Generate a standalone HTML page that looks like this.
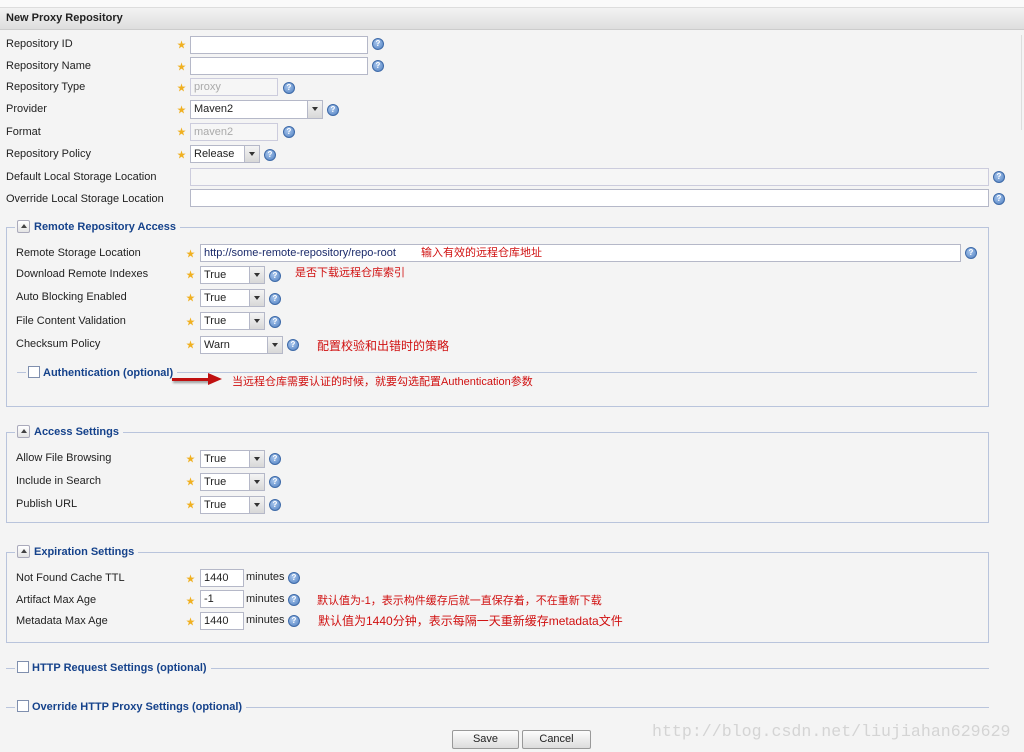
<!DOCTYPE html>
<html><head><meta charset="utf-8">
<style>
*{box-sizing:border-box;margin:0;padding:0}
body{width:1024px;height:752px;background:#f4f4f4;font-family:"Liberation Sans","Noto Sans CJK SC",sans-serif;font-size:11px;color:#222;position:relative;overflow:hidden}
.a{position:absolute}
.lbl{position:absolute;line-height:14px;white-space:nowrap}
.star{position:absolute;color:#f0b020;font-size:9px;line-height:10px}
.in{position:absolute;background:#fff;border:1px solid #b5b8c8;height:18px;line-height:16px;padding-left:3px;white-space:nowrap}
.dis{background:#f6f6f6;color:#aaa;border-color:#ccd}
.sel .ar{position:absolute;right:0;top:0;width:15px;height:16px;background:linear-gradient(#f4f4f4,#d8d8d8);border-left:1px solid #b5b8c8}
.sel .ar:after{content:"";position:absolute;left:4px;top:6px;border:3px solid transparent;border-top:4px solid #333;border-bottom:0;width:0}
.help{position:absolute;width:12px;height:12px;border-radius:50%;background:radial-gradient(circle at 40% 35%,#a9c7ee,#4f7fc0);border:1px solid #3e6aa8;color:#fff;font-size:8px;line-height:10px;text-align:center;font-weight:bold}
.fs{position:absolute;border:1px solid #b9c4dc}
.leg{position:absolute;background:#f4f4f4;color:#15428b;font-weight:bold;line-height:14px;padding:0 4px 0 2px;white-space:nowrap}
.tog{display:inline-block;width:13px;height:13px;border:1px solid #aab;border-radius:2px;background:linear-gradient(#fff,#e4e4e4);vertical-align:-3px;margin-right:4px;position:relative}
.tog:after{content:"";position:absolute;left:3px;top:3px;border:3px solid transparent;border-bottom:4px solid #444;border-top:0}
.cb{display:inline-block;width:12px;height:12px;border:1px solid #7f8fae;background:#fff;vertical-align:-2px;margin-right:3px}
.hl{position:absolute;height:1px;background:#b9c4dc}
.red{position:absolute;color:#d01010;white-space:nowrap;line-height:14px}
.btn{position:absolute;height:19px;border:1px solid #999;border-radius:2px;background:linear-gradient(#fdfdfd,#dcdcdc);text-align:center;line-height:17px}
</style></head><body>
<div class="a" style="left:0;top:0;width:1024px;height:8px;background:#fafafa;border-bottom:1px solid #ddd"></div>
<div class="a" style="left:0;top:8px;width:1024px;height:22px;background:linear-gradient(#f3f3f3,#dedede);border-bottom:1px solid #ccc"></div>
<div class="lbl" style="left:6px;top:11px;font-weight:bold;color:#222">New Proxy Repository</div>
<div class="a" style="left:1021px;top:35px;width:1px;height:95px;background:#ddd"></div>

<div class="lbl" style="left:6px;top:37px">Repository ID</div><div class="star" style="left:177px;top:40px">★</div>
<div class="in" style="left:190px;top:36px;width:178px"></div><div class="help" style="left:372px;top:38px">?</div>
<div class="lbl" style="left:6px;top:59px">Repository Name</div><div class="star" style="left:177px;top:62px">★</div>
<div class="in" style="left:190px;top:57px;width:178px"></div><div class="help" style="left:372px;top:60px">?</div>
<div class="lbl" style="left:6px;top:80px">Repository Type</div><div class="star" style="left:177px;top:83px">★</div>
<div class="in dis" style="left:190px;top:78px;width:88px">proxy</div><div class="help" style="left:283px;top:82px">?</div>
<div class="lbl" style="left:6px;top:102px">Provider</div><div class="star" style="left:177px;top:105px">★</div>
<div class="in sel" style="left:190px;top:100px;width:133px;height:19px">Maven2<div class="ar" style="height:17px"></div></div><div class="help" style="left:327px;top:104px">?</div>
<div class="lbl" style="left:6px;top:125px">Format</div><div class="star" style="left:177px;top:127px">★</div>
<div class="in dis" style="left:190px;top:123px;width:88px">maven2</div><div class="help" style="left:283px;top:126px">?</div>
<div class="lbl" style="left:6px;top:147px">Repository Policy</div><div class="star" style="left:177px;top:150px">★</div>
<div class="in sel" style="left:190px;top:145px;width:70px">Release<div class="ar"></div></div><div class="help" style="left:264px;top:149px">?</div>
<div class="lbl" style="left:6px;top:170px">Default Local Storage Location</div>
<div class="in dis" style="left:190px;top:168px;width:799px"></div><div class="help" style="left:993px;top:171px">?</div>
<div class="lbl" style="left:6px;top:192px">Override Local Storage Location</div>
<div class="in" style="left:190px;top:189px;width:799px"></div><div class="help" style="left:993px;top:193px">?</div>

<!-- Remote -->
<div class="fs" style="left:6px;top:227px;width:983px;height:180px"></div>
<div class="leg" style="left:15px;top:220px"><span class="tog"></span>Remote Repository Access</div>
<div class="lbl" style="left:16px;top:246px">Remote Storage Location</div><div class="star" style="left:186px;top:249px">★</div>
<div class="in" style="left:200px;top:244px;width:761px;color:#1a2a6a">http://some-remote-repository/repo-root</div><div class="help" style="left:965px;top:247px">?</div>
<div class="red" style="left:421px;top:246px">输入有效的远程仓库地址</div>
<div class="lbl" style="left:16px;top:267px">Download Remote Indexes</div><div class="star" style="left:186px;top:270px">★</div>
<div class="in sel" style="left:200px;top:266px;width:65px">True<div class="ar"></div></div><div class="help" style="left:269px;top:270px">?</div>
<div class="red" style="left:295px;top:266px">是否下载远程仓库索引</div>
<div class="lbl" style="left:16px;top:290px">Auto Blocking Enabled</div><div class="star" style="left:186px;top:293px">★</div>
<div class="in sel" style="left:200px;top:289px;width:65px">True<div class="ar"></div></div><div class="help" style="left:269px;top:293px">?</div>
<div class="lbl" style="left:16px;top:314px">File Content Validation</div><div class="star" style="left:186px;top:317px">★</div>
<div class="in sel" style="left:200px;top:312px;width:65px">True<div class="ar"></div></div><div class="help" style="left:269px;top:316px">?</div>
<div class="lbl" style="left:16px;top:337px">Checksum Policy</div><div class="star" style="left:186px;top:340px">★</div>
<div class="in sel" style="left:200px;top:336px;width:83px">Warn<div class="ar"></div></div><div class="help" style="left:287px;top:339px">?</div>
<div class="red" style="left:317px;top:339px;font-size:12px">配置校验和出错时的策略</div>
<div class="hl" style="left:17px;top:372px;width:960px"></div>
<div class="leg" style="left:26px;top:366px"><span class="cb"></span>Authentication (optional)</div>
<div class="a" style="left:172px;top:378px;width:38px;height:3px;background:#c01010;box-shadow:1px 2px 2px #999"></div>
<div class="a" style="left:208px;top:373px;border-left:14px solid #c01010;border-top:6px solid transparent;border-bottom:6px solid transparent;width:0;height:0"></div>
<div class="red" style="left:232px;top:375px">当远程仓库需要认证的时候，就要勾选配置Authentication参数</div>

<!-- Access -->
<div class="fs" style="left:6px;top:432px;width:983px;height:91px"></div>
<div class="leg" style="left:15px;top:425px"><span class="tog"></span>Access Settings</div>
<div class="lbl" style="left:16px;top:451px">Allow File Browsing</div><div class="star" style="left:186px;top:454px">★</div>
<div class="in sel" style="left:200px;top:450px;width:65px">True<div class="ar"></div></div><div class="help" style="left:269px;top:453px">?</div>
<div class="lbl" style="left:16px;top:474px">Include in Search</div><div class="star" style="left:186px;top:477px">★</div>
<div class="in sel" style="left:200px;top:473px;width:65px">True<div class="ar"></div></div><div class="help" style="left:269px;top:476px">?</div>
<div class="lbl" style="left:16px;top:497px">Publish URL</div><div class="star" style="left:186px;top:500px">★</div>
<div class="in sel" style="left:200px;top:496px;width:65px">True<div class="ar"></div></div><div class="help" style="left:269px;top:499px">?</div>

<!-- Expiration -->
<div class="fs" style="left:6px;top:552px;width:983px;height:91px"></div>
<div class="leg" style="left:15px;top:545px"><span class="tog"></span>Expiration Settings</div>
<div class="lbl" style="left:16px;top:571px">Not Found Cache TTL</div><div class="star" style="left:186px;top:574px">★</div>
<div class="in" style="left:200px;top:569px;width:44px">1440</div><div class="lbl" style="left:246px;top:570px">minutes</div><div class="help" style="left:288px;top:572px">?</div>
<div class="lbl" style="left:16px;top:593px">Artifact Max Age</div><div class="star" style="left:186px;top:596px">★</div>
<div class="in" style="left:200px;top:590px;width:44px">-1</div><div class="lbl" style="left:246px;top:592px">minutes</div><div class="help" style="left:288px;top:594px">?</div>
<div class="red" style="left:317px;top:594px">默认值为-1，表示构件缓存后就一直保存着，不在重新下载</div>
<div class="lbl" style="left:16px;top:614px">Metadata Max Age</div><div class="star" style="left:186px;top:617px">★</div>
<div class="in" style="left:200px;top:612px;width:44px">1440</div><div class="lbl" style="left:246px;top:613px">minutes</div><div class="help" style="left:288px;top:615px">?</div>
<div class="red" style="left:318px;top:614px;font-size:12px">默认值为1440分钟，表示每隔一天重新缓存metadata文件</div>

<div class="hl" style="left:6px;top:668px;width:983px"></div>
<div class="leg" style="left:15px;top:661px;padding-left:2px"><span class="cb"></span>HTTP Request Settings (optional)</div>
<div class="hl" style="left:6px;top:707px;width:983px"></div>
<div class="leg" style="left:15px;top:700px;padding-left:2px"><span class="cb"></span>Override HTTP Proxy Settings (optional)</div>

<div class="btn" style="left:452px;top:730px;width:67px">Save</div>
<div class="btn" style="left:522px;top:730px;width:69px">Cancel</div>
<div class="lbl" style="left:652px;top:722px;font-family:'Liberation Mono',monospace;font-size:16.6px;line-height:20px;color:#d4d4d4">http://blog.csdn.net/liujiahan629629</div>
</body></html>
